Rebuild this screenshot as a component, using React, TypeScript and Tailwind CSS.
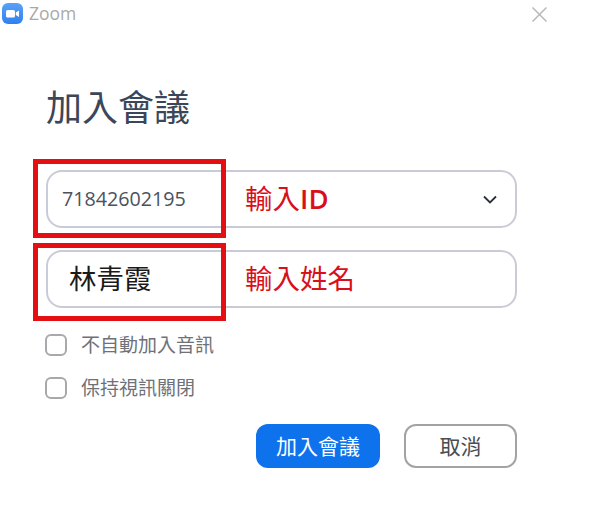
const cjk = "font-['Open_Sans','Noto_Sans_CJK_TC',sans-serif]";

function ZoomLogo() {
  return (
    <svg viewBox="0 0 21 21" className="h-[21px] w-[21px] shrink-0">
      <defs>
        <linearGradient id="zoomLogo" x1="0" y1="0" x2="0" y2="1">
          <stop offset="0" stopColor="#5aa2f8" />
          <stop offset="1" stopColor="#2f80f0" />
        </linearGradient>
      </defs>
      <rect width="21" height="21" rx="6" fill="url(#zoomLogo)" />
      <rect x="4" y="7" width="9" height="7.5" rx="1.6" fill="#fff" />
      <path d="M13.8 9.6 17 7.4v6.7l-3.2-2.2z" fill="#fff" />
    </svg>
  );
}

function Checkbox({ label }: { label: string }) {
  return (
    <div className="-ml-px flex h-[22px] items-center">
      <div className="h-[22px] w-[22px] rounded-[6px] border-2 border-[#a9a9ad] bg-white" />
      <span className="ml-[14px] text-[19px] leading-none text-[#6e7178]">{label}</span>
    </div>
  );
}

export default function App() {
  return (
    <div className={`relative flex h-[510px] w-[590px] flex-col overflow-hidden bg-white ${cjk}`}>
      {/* Title bar */}
      <div className="flex items-start justify-between pl-[2px] pr-[43px] pt-[3px]">
        <div className="flex items-center gap-[6px]">
          <ZoomLogo />
          <span className="text-[17.5px] leading-[21px] text-[#a9a9a9]">Zoom</span>
        </div>
        <svg viewBox="0 0 15 15" className="mt-[4px] h-[15px] w-[15px] text-[#b8b8b8]" fill="none" stroke="currentColor" strokeWidth={1.5}>
          <path d="M0.5 0.5l14 14M14.5 0.5l-14 14" />
        </svg>
      </div>

      <div className="flex flex-col pl-[46px] pr-[73px]">
        <h1 className="mt-[62px] text-[36px] font-normal leading-[44px] text-[#3c4659]">加入會議</h1>

        {/* Meeting ID */}
        <div className="mt-[40px] flex h-[58px] items-center rounded-[16px] border-2 border-[#c9cbd6] pl-[14px] pr-[18px]">
          <span className="w-[183px] text-[19.7px] leading-none text-[#4a5260]">71842602195</span>
          <span className="text-[27.5px] leading-none text-[#d9101a]">
            輸入<span className="font-semibold">ID</span>
          </span>
          <svg viewBox="0 0 14 9" className="ml-auto h-[9px] w-[14px]" fill="none" stroke="#2b2f36" strokeWidth={1.8}>
            <path d="M1 1.5l6 6 6-6" />
          </svg>
        </div>

        {/* Name */}
        <div className="mt-[22px] flex h-[58px] items-center rounded-[16px] border-2 border-[#c9cbd6] pl-[21px] pr-[18px]">
          <span className="w-[176px] text-[27.5px] leading-none text-[#1a1a1a]">林青霞</span>
          <span className="text-[27.5px] leading-none text-[#d9101a]">輸入姓名</span>
        </div>

        <div className="mt-[26px] flex flex-col gap-[21px]">
          <Checkbox label="不自動加入音訊" />
          <Checkbox label="保持視訊關閉" />
        </div>

        <div className="mt-[25px] flex justify-end gap-[24px]">
          <button className="h-[44px] w-[124px] rounded-[12px] bg-[#0e72ed] text-[21px] leading-none text-white">加入會議</button>
          <button className="h-[44px] w-[113px] rounded-[12px] border-2 border-[#a3a3a3] bg-white text-[21px] leading-none text-[#4a4d52]">取消</button>
        </div>
      </div>

      {/* Red annotation boxes */}
      <div className="absolute left-[33px] top-[159px] h-[79px] w-[193px] border-[5px] border-[#e30f13]" />
      <div className="absolute left-[33px] top-[243px] h-[78px] w-[193px] border-[5px] border-[#e30f13]" />
    </div>
  );
}
